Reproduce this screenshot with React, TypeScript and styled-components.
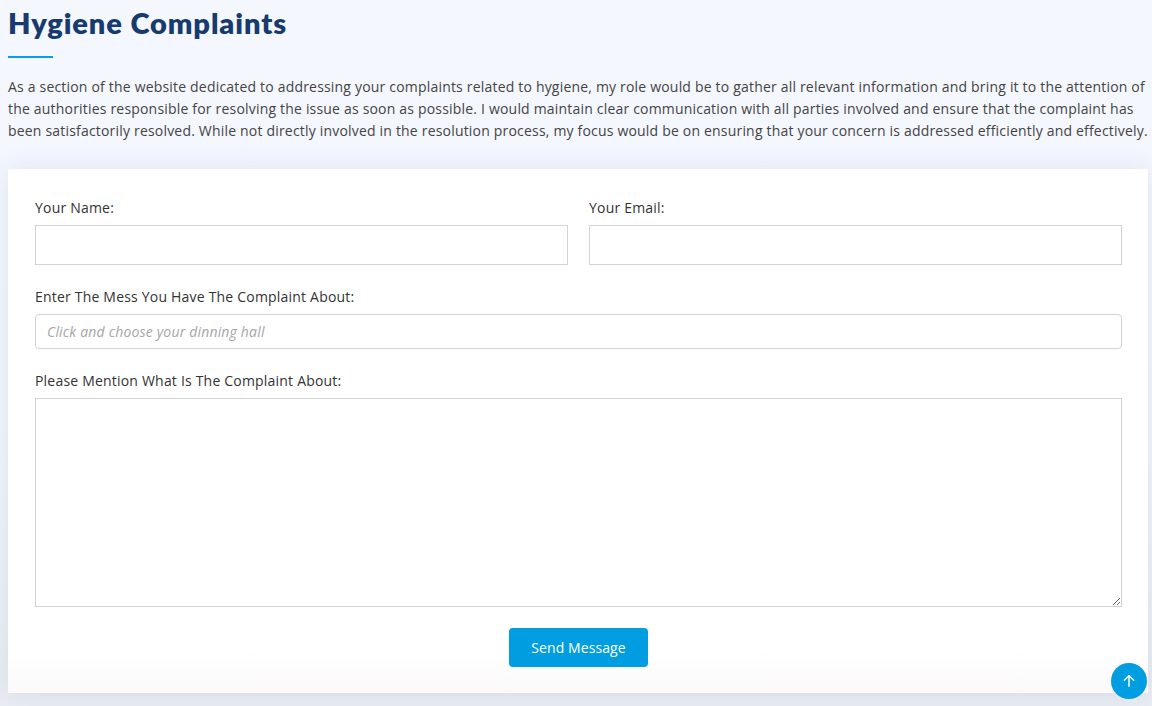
import styled, { createGlobalStyle } from 'styled-components'

const GlobalStyle = createGlobalStyle`
    html, body {
        margin: 0;
        padding: 0;
    }
    body {
        background: linear-gradient(180deg, #f4f7fe 0%, #f3f6fd 60%, #e9ecf2 100%);
        font-family: "Open Sans", "Liberation Sans", sans-serif;
        color: #444;
        min-height: 706px;
        overflow: hidden;
    }
`

const Page = styled.section`
    padding: 0 4px 12px 8px;
    min-height: 706px;
    box-sizing: border-box;
    position: relative;
`

const Title = styled.h2`
    margin: 0;
    padding-top: 5px;
    font-family: "Lato", "Inter", sans-serif;
    font-weight: 800;
    font-size: 29px;
    line-height: 36px;
    color: #173b6e;
    letter-spacing: 0.9px;
`

const Underline = styled.div`
    width: 45px;
    height: 2px;
    background: #0a9de0;
    margin: 15px 0 18px;
`

const Intro = styled.p`
    margin: 0 0 27px;
    font-size: 14px;
    line-height: 22px;
    letter-spacing: 0.19px;
    color: #444;
`

const Card = styled.form`
    background: linear-gradient(180deg, #ffffff 0%, #ffffff 92%, #fbf9f9 100%);
    box-shadow: 0 0 24px rgba(40, 55, 90, 0.1);
    padding: 28px 26px 26px 27px;
    display: flex;
    flex-direction: column;
    gap: 21px;
`

const Row = styled.div`
    display: grid;
    grid-template-columns: 1fr 1fr;
    gap: 21px;
`

const Field = styled.div`
    display: flex;
    flex-direction: column;
`

const Label = styled.label`
    font-size: 14px;
    line-height: 21px;
    letter-spacing: 0.2px;
    color: #333;
    margin-bottom: 7px;
`

const TextInput = styled.input`
    height: 40px;
    box-sizing: border-box;
    border: 1px solid #ced4da;
    border-radius: 0;
    background: #fff;
    padding: 0 12px;
    font-family: inherit;
    font-size: 14px;
    outline: none;
`

const Select = styled.input`
    height: 35px;
    box-sizing: border-box;
    border: 1px solid #ced4da;
    border-radius: 4px;
    background: #fff;
    padding: 0 11px;
    font-family: inherit;
    font-size: 14px;
    letter-spacing: 0.18px;
    outline: none;

    &::placeholder {
        color: #a6a6a6;
        font-style: italic;
    }
`

const TextArea = styled.textarea`
    height: 209px;
    box-sizing: border-box;
    border: 1px solid #ced4da;
    border-radius: 0;
    padding: 10px 12px;
    font-family: inherit;
    font-size: 14px;
    resize: vertical;
    outline: none;
`

const Actions = styled.div`
    display: flex;
    justify-content: center;
`

const SendButton = styled.button`
    width: 139px;
    height: 39px;
    border: 0;
    border-radius: 4px;
    background: #009ee0;
    color: #fff;
    font-family: "Open Sans", "Liberation Sans", sans-serif;
    font-size: 14px;
    letter-spacing: 0.1px;
    cursor: pointer;
`

const BackToTop = styled.a`
    position: fixed;
    right: 5px;
    bottom: 7px;
    width: 36px;
    height: 36px;
    border-radius: 50%;
    background: #009ee0;
    display: flex;
    align-items: center;
    justify-content: center;
`

const App = () => {
    return (
        <>
            <GlobalStyle />
            <Page>
                <Title>Hygiene Complaints</Title>
                <Underline />
                <Intro>
                    As a section of the website dedicated to addressing your complaints related to hygiene, my role would be to gather all relevant information and bring it to the attention of the authorities responsible for resolving the issue as soon as possible. I would maintain clear communication with all parties involved and ensure that the complaint has been satisfactorily resolved. While not directly involved in the resolution process, my focus would be on ensuring that your concern is addressed efficiently and effectively.
                </Intro>

                <Card onSubmit={e => e.preventDefault()}>
                    <Row>
                        <Field>
                            <Label>Your Name:</Label>
                            <TextInput type="text" />
                        </Field>
                        <Field>
                            <Label>Your Email:</Label>
                            <TextInput type="email" />
                        </Field>
                    </Row>

                    <Field>
                        <Label>Enter The Mess You Have The Complaint About:</Label>
                        <Select placeholder="Click and choose your dinning hall" />
                    </Field>

                    <Field>
                        <Label>Please Mention What Is The Complaint About:</Label>
                        <TextArea />
                    </Field>

                    <Actions>
                        <SendButton type="submit">Send Message</SendButton>
                    </Actions>
                </Card>

                <BackToTop href="#">
                    <svg width="16" height="16" viewBox="0 0 24 24" fill="none" stroke="#fff" strokeWidth="2.2" strokeLinecap="round" strokeLinejoin="round">
                        <path d="M12 20V4" />
                        <path d="M5 11l7-7 7 7" />
                    </svg>
                </BackToTop>
            </Page>
        </>
    )
}

export default App
